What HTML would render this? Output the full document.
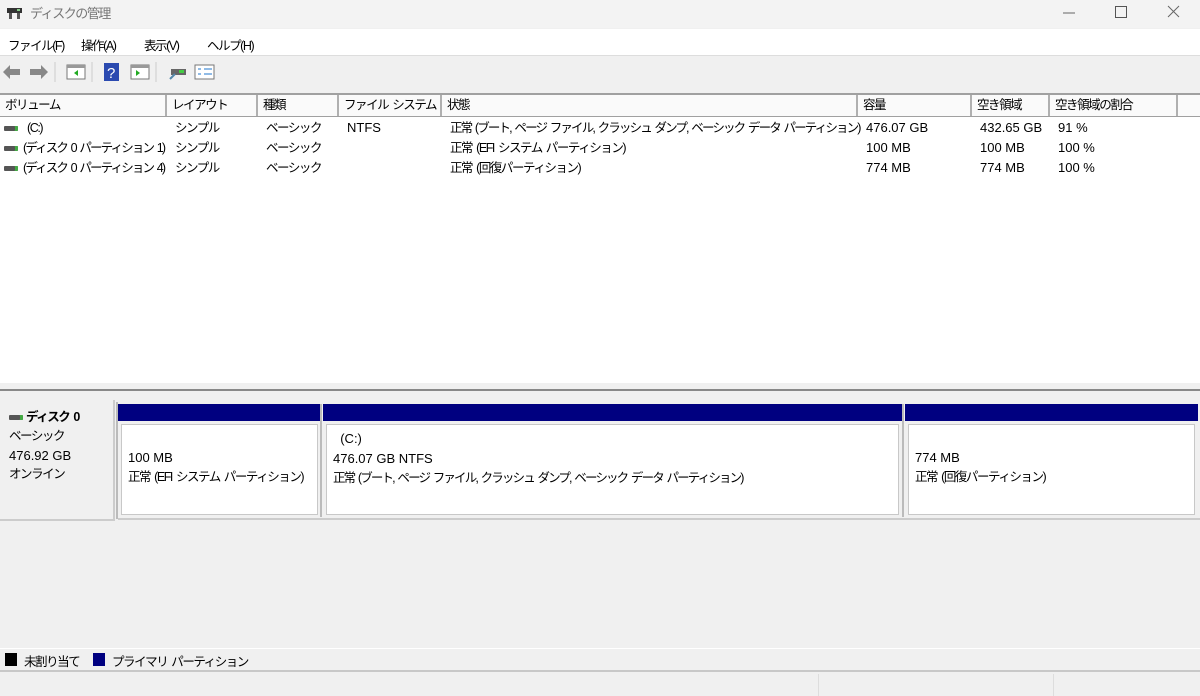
<!DOCTYPE html>
<html><head><meta charset="utf-8"><style>
*{margin:0;padding:0;box-sizing:border-box}
body{width:1200px;height:696px;overflow:hidden;background:#f0f0f0;font-family:"Liberation Sans","Noto Sans CJK JP",sans-serif;font-size:12.5px;letter-spacing:-1.45px;word-spacing:2px;color:#000;position:relative}
.a{position:absolute;white-space:nowrap}
.l{letter-spacing:0;word-spacing:0;font-size:13px}
.s{letter-spacing:-1.85px}
.hdr{position:absolute;top:93px;height:24px;border-top:2px solid #a0a0a0;border-bottom:1px solid #a0a0a0;background:#fafafa;left:0;width:1200px}
.hc{position:absolute;top:0;height:21px;border-right:2px solid #b0b0b0;padding-left:5px;line-height:21px;white-space:nowrap;overflow:hidden}
.row{position:absolute;height:20px;line-height:20px;white-space:nowrap}
.di{display:inline-block;width:14px;height:5px;background:#555;border-radius:1px;vertical-align:middle;margin-right:5px;box-shadow:inset -3px 0 #4a4}
.part{position:absolute;top:404px;height:113px;background:#f0f0f0}
.part .bar{height:17px;background:#000080}
.part .box{position:absolute;top:20px;left:3px;right:3px;bottom:2px;background:#fff;border:1px solid #c8c8c8;padding:4px 6px;line-height:19px;white-space:nowrap;overflow:hidden}
</style></head><body>
<div class="a" style="left:0;top:0;width:1200px;height:28px;background:#f3f3f3"></div>
<div class="a" style="left:6px;top:5px;width:17px;height:14px"><svg width="17" height="15"><rect x="1" y="3" width="15" height="5" fill="#333"/><rect x="3" y="8" width="3" height="6" fill="#555"/><rect x="11" y="8" width="3" height="6" fill="#555"/><rect x="11" y="4" width="3" height="2" fill="#8c8"/></svg></div>
<div class="a" style="left:30px;top:3px;color:#777;font-size:13px">ディスクの管理</div>
<svg class="a" style="left:1055px;top:2px" width="140" height="20">
<line x1="8" y1="11" x2="20" y2="11" stroke="#666"/>
<rect x="60.5" y="4.5" width="11" height="11" fill="none" stroke="#555"/>
<path d="M113 4 L124 15 M124 4 L113 15" stroke="#666"/>
</svg>
<div class="a" style="left:0;top:29px;width:1200px;height:27px;background:#fff;border-bottom:1px solid #ddd"></div>
<div class="a" style="left:8px;top:35px">ファイル(F)</div>
<div class="a" style="left:81px;top:35px">操作(A)</div>
<div class="a" style="left:144px;top:35px">表示(V)</div>
<div class="a" style="left:207px;top:35px">ヘルプ(H)</div>
<div class="a" style="left:0;top:57px;width:1200px;height:28px;background:#f0f0f0"></div>
<svg class="a" style="left:0;top:60px" width="230" height="24">
<path d="M3 12 L10 5 V9 H20 V15 H10 V19 Z" fill="#888"/>
<path d="M48 12 L41 5 V9 H30 V15 H41 V19 Z" fill="#888"/>
<line x1="55" y1="2" x2="55" y2="22" stroke="#ccc"/>
<rect x="67" y="5" width="18" height="14" fill="#fff" stroke="#777"/><rect x="67" y="5" width="18" height="3" fill="#999"/><path d="M78 10 L74 13 L78 16Z" fill="#2a2"/>
<line x1="92" y1="2" x2="92" y2="22" stroke="#ccc"/>
<rect x="104" y="3" width="15" height="18" fill="#2b4ab0"/><text x="107" y="18" fill="#fff" font-size="15" font-family="Liberation Sans">?</text>
<rect x="131" y="5" width="18" height="14" fill="#fff" stroke="#777"/><rect x="131" y="5" width="18" height="3" fill="#999"/><path d="M136 10 L140 13 L136 16Z" fill="#2a2"/>
<line x1="156" y1="2" x2="156" y2="22" stroke="#ccc"/>
<rect x="171" y="9" width="15" height="6" fill="#666"/><rect x="179" y="10" width="5" height="3" fill="#4c4"/><line x1="170" y1="19" x2="175" y2="14" stroke="#58a" stroke-width="2"/>
<rect x="195" y="5" width="19" height="14" fill="#fff" stroke="#777"/><path d="M198 9h3M198 14h3M204 9h8M204 14h8" stroke="#27c"/>
</svg>
<div class="a" style="left:0;top:86px;width:1200px;height:7px;background:#f0f0f0"></div>
<div class="a" style="left:0;top:117px;width:1200px;height:266px;background:#fff"></div>
<div class="hdr">
<div class="hc" style="left:0;width:167px">ボリューム</div>
<div class="hc" style="left:167px;width:91px">レイアウト</div>
<div class="hc" style="left:258px;width:81px">種類</div>
<div class="hc" style="left:339px;width:103px">ファイル システム</div>
<div class="hc" style="left:442px;width:416px">状態</div>
<div class="hc" style="left:858px;width:114px">容量</div>
<div class="hc" style="left:972px;width:78px">空き領域</div>
<div class="hc" style="left:1050px;width:128px">空き領域の割合</div>
</div>
<div class="row" style="top:118px;left:4px"><span class="di"></span> (C:)</div>
<div class="row s" style="top:138px;left:4px"><span class="di"></span>(ディスク 0 パーティション 1)</div>
<div class="row s" style="top:158px;left:4px"><span class="di"></span>(ディスク 0 パーティション 4)</div>
<div class="row" style="top:118px;left:175px">シンプル</div><div class="row" style="top:138px;left:175px">シンプル</div><div class="row" style="top:158px;left:175px">シンプル</div>
<div class="row" style="top:118px;left:266px">ベーシック</div><div class="row" style="top:138px;left:266px">ベーシック</div><div class="row" style="top:158px;left:266px">ベーシック</div>
<div class="row l" style="top:118px;left:347px">NTFS</div>
<div class="row s" style="top:118px;left:450px">正常 (ブート, ページ ファイル, クラッシュ ダンプ, ベーシック データ パーティション)</div>
<div class="row" style="top:138px;left:450px">正常 (EFI システム パーティション)</div>
<div class="row" style="top:158px;left:450px">正常 (回復パーティション)</div>
<div class="row l" style="top:118px;left:866px">476.07 GB</div><div class="row l" style="top:138px;left:866px">100 MB</div><div class="row l" style="top:158px;left:866px">774 MB</div>
<div class="row l" style="top:118px;left:980px">432.65 GB</div><div class="row l" style="top:138px;left:980px">100 MB</div><div class="row l" style="top:158px;left:980px">774 MB</div>
<div class="row l" style="top:118px;left:1058px">91 %</div><div class="row l" style="top:138px;left:1058px">100 %</div><div class="row l" style="top:158px;left:1058px">100 %</div>
<div class="a" style="left:0;top:389px;width:1200px;height:2px;background:#888"></div>
<div class="a" style="left:0;top:400px;width:115px;height:121px;background:#f0f0f0;border-right:2px solid #ccc;border-bottom:2px solid #ccc;padding:8px 0 0 9px;line-height:19px">
<div style="font-weight:bold"><span class="di" style="margin-right:3px"></span>ディスク 0</div>
<div>ベーシック</div><div class="l">476.92 GB</div><div>オンライン</div></div>
<div class="a" style="left:116px;top:402px;width:2px;height:117px;background:#bbb"></div>
<div class="part" style="left:118px;width:203px"><div class="bar"></div><div class="box"><br><span class="l">100 MB</span><br>正常 (EFI システム パーティション)</div></div>
<div class="a" style="left:320px;top:404px;width:2px;height:113px;background:#bbb"></div>
<div class="part" style="left:323px;width:579px"><div class="bar"></div><div class="box"><span class="l">&nbsp;&nbsp;(C:)</span><br><span class="l">476.07 GB NTFS</span><br><span class="s">正常 (ブート, ページ ファイル, クラッシュ ダンプ, ベーシック データ パーティション)</span></div></div>
<div class="a" style="left:902px;top:404px;width:2px;height:113px;background:#bbb"></div>
<div class="part" style="left:905px;width:293px"><div class="bar"></div><div class="box"><br><span class="l">774 MB</span><br>正常 (回復パーティション)</div></div>
<div class="a" style="left:118px;top:518px;width:1082px;height:2px;background:#ccc"></div>
<div class="a" style="left:0;top:648px;width:1200px;height:1px;background:#fff"></div>
<div class="a" style="left:5px;top:653px;width:12px;height:13px;background:#000"></div>
<div class="a" style="left:24px;top:651px">未割り当て</div>
<div class="a" style="left:93px;top:653px;width:12px;height:13px;background:#000080"></div>
<div class="a" style="left:112px;top:651px">プライマリ パーティション</div>
<div class="a" style="left:0;top:670px;width:1200px;height:2px;background:#c8c8c8"></div>
<div class="a" style="left:818px;top:674px;width:1px;height:22px;background:#ddd"></div>
<div class="a" style="left:1053px;top:674px;width:1px;height:22px;background:#ddd"></div>
</body></html>
